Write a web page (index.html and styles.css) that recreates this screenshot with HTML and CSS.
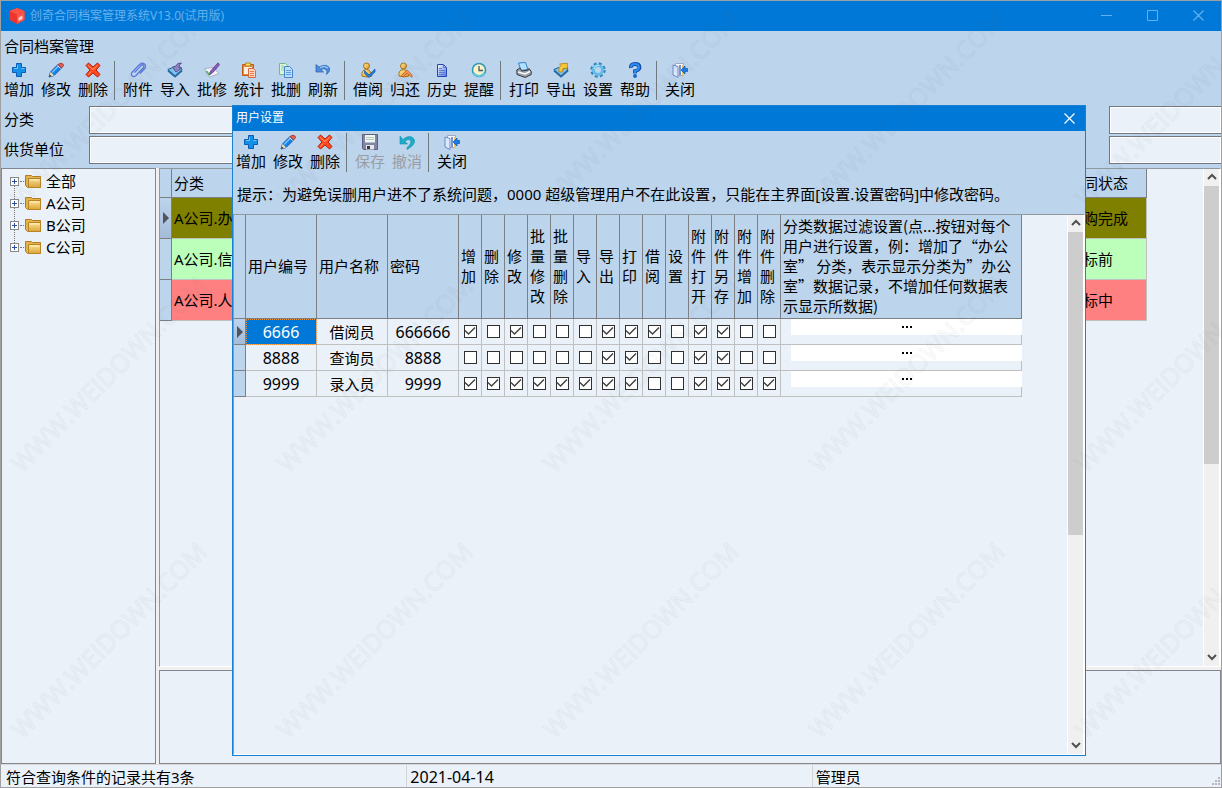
FILE: index.html
```html
<!DOCTYPE html>
<html lang="zh-CN">
<head>
<meta charset="utf-8">
<title>创奇合同档案管理系统</title>
<link rel="stylesheet" href="styles.css">
</head>
<body>
<svg class="defs" aria-hidden="true">
  <defs>
    <linearGradient id="gb" x1="0" y1="0" x2="1" y2="1"><stop offset="0" stop-color="#5cc8ff"/><stop offset="1" stop-color="#0668c8"/></linearGradient>
    <linearGradient id="gy" x1="0" y1="0" x2="1" y2="1"><stop offset="0" stop-color="#fff0a0"/><stop offset="1" stop-color="#dc941c"/></linearGradient>
    <linearGradient id="gf" x1="0" y1="0" x2="0" y2="1"><stop offset="0" stop-color="#fbe49a"/><stop offset="1" stop-color="#dca437"/></linearGradient>
    <linearGradient id="gd" x1="0" y1="0" x2="1" y2="1"><stop offset="0" stop-color="#f4f8ff"/><stop offset="1" stop-color="#5878dc"/></linearGradient>
  </defs>
  <symbol id="add" viewBox="0 0 16 16"><path d="M5.500 1.500h5v4h4v5h-4v4h-5v-4h-4v-5h4z" fill="#1490e8" stroke="#0a5cb4"/><path d="M6.500 3v3.500H3M10.500 6.500h3" fill="none" stroke="#6cc8ff"/></symbol>
  <symbol id="edit" viewBox="0 0 16 16"><path d="M1 15l1.500-5L10 2.500l3.500 3.500L6 13.500z" fill="#1684e8" stroke="#1258b0"/><path d="M4 10.500l6.500-6.500" stroke="#7cc8ff" stroke-width="1.200"/><path d="M10 2.500Q13 .2 15 2q1.400 2-1.500 4z" fill="#e86050" stroke="#a84038"/><path d="M9.500 3.500l3 3" stroke="#e8e8f0"/><path d="M1 15l1.500-5L6 13.500z" fill="#f4dcb0"/><path d="M1 15l.8-2.500 1.700 1.700z" fill="#223"/></symbol>
  <symbol id="del" viewBox="0 0 16 16"><path d="M1 3.500L3.500 1 8 5l4.500-4L15 3.500 11 8l4 4.500-2.500 2.500L8 11l-4.500 4L1 12.500 5 8z" fill="#ff4a20" stroke="#b81c08"/><path d="M3 3.500l5 4 4.500-4M3.500 12.500L6 9.500" fill="none" stroke="#ff9a74"/></symbol>
  <symbol id="clip" viewBox="0 0 16 16"><path d="M4.500 10.500l6.500-7q1.500-1.300 2.500-.3t-.2 2.500l-7.500 8q-2 1.700-3.600.3T2 10.500L9 3q3-3 5.500-1t.2 4.500L10 11.500" fill="none" stroke="#5a78dc" stroke-width="1.300"/><path d="M3 11l7-7.500" stroke="#b4c8ff" stroke-width=".6"/></symbol>
  <symbol id="import" viewBox="0 0 16 16"><path d="M.8 7.500l5-2 3 2 5-2.500L15 8l-7 6.500z" fill="#7cc4ec" stroke="#225c90"/><path d="M1 8.500l7 6 7-6" fill="none" stroke="#2468a4" stroke-width="1.800"/><path d="M14.500 1Q10 .5 9 4L5.500 5 9 10l5-3.500-2-1Q12 2.500 14.500 1z" fill="#9084c4" stroke="#5c5090"/></symbol>
  <symbol id="batch" viewBox="0 0 16 16"><path d="M.8 6.500l9-1 5 6-9 3.500q-3-1-5-8.500z" fill="#f4f6fb" stroke="#a4acc4"/><path d="M2.500 9l2.500 3.500L7 9" fill="none" stroke="#5cb05c" stroke-width="1.500"/><path d="M5.500 13L7 8.500 14 .8l1.500 2L9.500 10z" fill="#8c58bc" stroke="#5c3888" stroke-width=".7"/></symbol>
  <symbol id="stat" viewBox="0 0 16 16"><path d="M1.500 2.500h11v11h-11z" fill="#e88c3c" stroke="#b85c1c"/><path d="M4.500 1h5v3h-5z" fill="#ffe060" stroke="#b48420"/><path d="M3 5h8v7H3z" fill="#fff0dc"/><path d="M7.500 6.500h5l2 2v7h-7z" fill="#ffd8c4" stroke="#d86840"/><path d="M9 9.500h4M9 11.500h4M9 13.500h4" stroke="#e87850"/></symbol>
  <symbol id="copy" viewBox="0 0 16 16"><path d="M1.500 1.500h6l2 2v9h-8z" fill="#dcf6dc" stroke="#78b888"/><path d="M3 4h3M3 6h3M3 8h3" stroke="#90ccaa"/><path d="M6.500 4.500h5l3 3v8h-8z" fill="#c0dcff" stroke="#4284cc"/><path d="M8 8.500h5M8 10.500h5M8 12.500h5" stroke="#5c9ce4"/></symbol>
  <symbol id="refresh" viewBox="0 0 16 16"><path d="M1 2.500v7.500h7.500L5.800 7.500q3.400-1.700 5.200 0 1.700 1.700.5 5 4-3 3-6.500-3-5-10.500-1z" fill="#4c8cdc" stroke="#3468b4" stroke-width=".8"/><path d="M5 5.500q5-2.500 8 .5" fill="none" stroke="#b4dcff"/></symbol>
  <symbol id="lend" viewBox="0 0 16 16"><circle cx="6.500" cy="4" r="3" fill="url(#gy)" stroke="#a87018"/><path d="M2 14q-1-6 4.500-6.500Q11 8 12 14q-5 2-10 0z" fill="url(#gy)" stroke="#a87018"/><path d="M4.500 8.500L9 13l6-6v3l-6 5.500-4.500-4z" fill="#2080e0" stroke="#1458a8" stroke-width=".7"/></symbol>
  <symbol id="return" viewBox="0 0 16 16"><circle cx="6.500" cy="4" r="3" fill="url(#gy)" stroke="#a87018"/><path d="M2 14q-1-6 4.500-6.500Q11 8 12 14q-5 2-10 0z" fill="url(#gy)" stroke="#a87018"/><path d="M4.500 13.500L10 8l5 5v2.500L10 11l-4 4z" fill="#ff9450" stroke="#b85820" stroke-width=".7"/></symbol>
  <symbol id="history" viewBox="0 0 16 16"><path d="M3.500 2.500h6l3 3v9h-9z" fill="url(#gd)" stroke="#2446b4"/><path d="M9.500 2.500v3h3M5 6.500h3M5 8.500h6M5 10.500h6M5 12.500h6" fill="none" stroke="#5c7cdc"/></symbol>
  <symbol id="clock" viewBox="0 0 16 16"><circle cx="8" cy="8" r="6.500" fill="#fff2c4" stroke="#2d9cba" stroke-width="1.600"/><path d="M2.500 11q5.500 6 11 0" fill="none" stroke="#66ccdc" stroke-width="2"/><path d="M8 4v4.500h4" fill="none" stroke="#465868" stroke-width="1.300"/></symbol>
  <symbol id="print" viewBox="0 0 16 16"><path d="M2.500 1l7-.5 2.500 7-7 1z" fill="#b4e0ff" stroke="#3480c8"/><path d="M.8 8l3-2L6 9l6-1 1-1.500 2.200 3v3l-6 3-8.200-3z" fill="#9ca0a8" stroke="#34383f"/><path d="M2 10l7 2 5-2.500" fill="none" stroke="#f8f8f8" stroke-width="1.500"/></symbol>
  <symbol id="export" viewBox="0 0 16 16"><path d="M.8 7.500l5-2 3 2 5-2.500L15 8l-7 6.500z" fill="#7cc4ec" stroke="#225c90"/><path d="M1 8.500l7 6 7-6" fill="none" stroke="#2468a4" stroke-width="1.800"/><path d="M6 10q-1-5 2-6.500L6.500 2l8-.8L14 7.500l-2-1.500Q9 6 9.500 10z" fill="#f8c838" stroke="#b47c10" stroke-width=".8"/></symbol>
  <symbol id="gear" viewBox="0 0 16 16"><circle cx="8" cy="8" r="6" fill="none" stroke="#3484bc" stroke-width="3.400" stroke-dasharray="2.700 2.012"/><circle cx="8" cy="8" r="4.500" fill="none" stroke="#64bce8" stroke-width="3"/><path d="M4 7q1-4 5-3.500" fill="none" stroke="#c8f0ff"/></symbol>
  <symbol id="help" viewBox="0 0 16 16"><path d="M3.800 6Q3.500 2 8 2t4.500 3.500Q12.500 8 8 9v2.500" fill="none" stroke="#124ca8" stroke-width="3.800"/><path d="M3.800 5.500Q4 2 8 2t4 3.500Q12 8 8 9v2" fill="none" stroke="#2c8cf0" stroke-width="2"/><circle cx="8" cy="14" r="2" fill="#1868d0"/></symbol>
  <symbol id="exit" viewBox="0 0 16 16"><path d="M3.500 1.500h8v12h-8z" fill="#f6f8ff" stroke="#a0a8c0"/><path d="M1 3l5 1.500v11L1 13z" fill="#dce8fc" stroke="#6c88c8"/><path d="M7 3h2v10H7z" fill="#7894d8"/><path d="M10 3h2v11h-2z" fill="#e4c460"/><path d="M15.500 6.500H13V4L9 8l4 4V9.500h2.500z" fill="#1c7ce8" stroke="#0c50a8" stroke-width=".7"/></symbol>
  <symbol id="save" viewBox="0 0 16 16"><path d="M.5.5h15v15h-14l-1-1z" fill="#8484a4" stroke="#60607c"/><path d="M3 1h10v7.500H3z" fill="#eef6f0"/><path d="M4 3.500h8M4 5.500h8" stroke="#b4c8bc"/><path d="M4 11h8v4.500H4z" fill="#e8e8ec"/><path d="M5 12h3v3H5z" fill="#303844"/></symbol>
  <symbol id="undo" viewBox="0 0 16 16"><path d="M1 2v8h7.500L6 7.500Q9 4.300 11.300 6q2 3-3.300 7.500v2q8.500-4.500 7.500-9.500Q13 .8 6.500 3.500L4.200 5.500z" fill="#1cacc8" stroke="#1490b0" stroke-width=".6"/></symbol>
  <symbol id="folder" viewBox="0 0 16 14"><path d="M.5 1.500h6l1 1h8v11h-13l-2-2z" fill="#e4b44c" stroke="#b47c20"/><path d="M3.500 4.500h12v9h-12z" fill="url(#gf)" stroke="#b88424"/><path d="M5 6h9" stroke="#fff2b8"/></symbol>
  <symbol id="close" viewBox="0 0 11 11"><path d="M.5.5l10 10M10.500.5l-10 10" fill="none" stroke="currentColor" stroke-width="1.200"/></symbol>
  <symbol id="up" viewBox="0 0 10 10"><path d="M1 7l4-4 4 4" fill="none" stroke="#505050" stroke-width="2"/></symbol>
  <symbol id="down" viewBox="0 0 10 10"><path d="M1 3l4 4 4-4" fill="none" stroke="#505050" stroke-width="2"/></symbol>
</svg>

<div class="window">
  <header class="titlebar">
    <svg class="logo" viewBox="0 0 16 16"><path d="M8 0l7.500 3v9L8 16 .5 12V3z" fill="#ee352e"/><path d="M8 0l7.500 3L8 6.500.5 3z" fill="#ff5348"/><path d="M8 6.500V16l7.500-4V3.500z" fill="#ff5348"/><path d="M9.500 9.500l4-2v3.500l-4 2z" fill="#ffd0c8"/></svg>
    <span class="app-name">创奇合同档案管理系统V13.0(试用版)</span>
    <button class="caption" aria-label="最小化"><svg width="11" height="11"><path d="M0 5.500h11" stroke="currentColor"/></svg></button>
    <button class="caption" aria-label="最大化"><svg width="11" height="11"><path d="M.5.5h10v10H.5z" fill="none" stroke="currentColor"/></svg></button>
    <button class="caption" aria-label="关闭窗口"><svg width="11" height="11"><use href="#close"/></svg></button>
  </header>
  <div class="menu">合同档案管理</div>
  <nav class="toolbar">
    <button><svg><use href="#add"/></svg>增加</button>
    <button><svg><use href="#edit"/></svg>修改</button>
    <button><svg><use href="#del"/></svg>删除</button>
    <i></i>
    <button><svg><use href="#clip"/></svg>附件</button>
    <button><svg><use href="#import"/></svg>导入</button>
    <button><svg><use href="#batch"/></svg>批修</button>
    <button><svg><use href="#stat"/></svg>统计</button>
    <button><svg><use href="#copy"/></svg>批删</button>
    <button><svg><use href="#refresh"/></svg>刷新</button>
    <i></i>
    <button><svg><use href="#lend"/></svg>借阅</button>
    <button><svg><use href="#return"/></svg>归还</button>
    <button><svg><use href="#history"/></svg>历史</button>
    <button><svg><use href="#clock"/></svg>提醒</button>
    <i></i>
    <button><svg><use href="#print"/></svg>打印</button>
    <button><svg><use href="#export"/></svg>导出</button>
    <button><svg><use href="#gear"/></svg>设置</button>
    <button><svg><use href="#help"/></svg>帮助</button>
    <i></i>
    <button><svg><use href="#exit"/></svg>关闭</button>
  </nav>
  <form class="filters">
    <label for="kind">分类</label><input id="kind" type="text"><input class="last" type="text" aria-label="条件一">
    <label for="vendor">供货单位</label><input id="vendor" type="text"><input class="last" type="text" aria-label="条件二">
  </form>
  <main class="panes">
    <ul class="tree">
      <li><span class="plus"></span><svg><use href="#folder"/></svg>全部</li>
      <li><span class="plus"></span><svg><use href="#folder"/></svg>A公司</li>
      <li><span class="plus"></span><svg><use href="#folder"/></svg>B公司</li>
      <li><span class="plus"></span><svg><use href="#folder"/></svg>C公司</li>
    </ul>
    <div class="right">
      <section class="grid">
        <div class="sheet">
          <table class="records">
            <colgroup><col class="c-mark"><col><col class="c-state"></colgroup>
            <tr><th class="mark"></th><th>分类</th><th>同状态</th></tr>
            <tr class="olive"><td class="mark current"></td><td>A公司.办</td><td>购完成</td></tr>
            <tr class="green"><td class="mark"></td><td>A公司.信</td><td>标前</td></tr>
            <tr class="red"><td class="mark"></td><td>A公司.人</td><td>标中</td></tr>
          </table>
        </div>
        <div class="scroll"><svg><use href="#up"/></svg><div class="track"><div class="thumb"></div></div><svg><use href="#down"/></svg></div>
      </section>
      <section class="detail"></section>
    </div>
  </main>
  <footer class="status">
    <span>符合查询条件的记录共有3条</span><span class="num">2021-04-14</span><span>管理员</span>
    <svg class="grip" viewBox="0 0 8 8"><path d="M6 0h2v2H6zM6 3h2v2H6zM3 3h2v2H3zM6 6h2v2H6zM3 6h2v2H3zM0 6h2v2H0z" fill="#b4b8bc"/></svg>
  </footer>
</div>

<div class="dialog" role="dialog" aria-labelledby="dlg">
  <header class="dialog-title"><span id="dlg">用户设置</span><button class="caption" aria-label="关闭对话框"><svg width="11" height="11"><use href="#close"/></svg></button></header>
  <nav class="toolbar">
    <button><svg><use href="#add"/></svg>增加</button>
    <button><svg><use href="#edit"/></svg>修改</button>
    <button><svg><use href="#del"/></svg>删除</button>
    <i></i>
    <button disabled><svg><use href="#save"/></svg>保存</button>
    <button disabled><svg><use href="#undo"/></svg>撤消</button>
    <i></i>
    <button><svg><use href="#exit"/></svg>关闭</button>
  </nav>
  <p class="hint">提示：为避免误删用户进不了系统问题，0000 超级管理用户不在此设置，只能在主界面[设置.设置密码]中修改密码。</p>
  <section class="grid">
    <div class="sheet">
      <table class="users">
        <colgroup><col class="c-mark"><col class="c-name" span="3"><col class="c-flag" span="14"><col class="c-filter"></colgroup>
        <thead>
          <tr><th class="mark"></th><th>用户编号</th><th>用户名称</th><th>密码</th><th class="v">增加</th><th class="v">删除</th><th class="v">修改</th><th class="v">批量修改</th><th class="v">批量删除</th><th class="v">导入</th><th class="v">导出</th><th class="v">打印</th><th class="v">借阅</th><th class="v">设置</th><th class="v">附件打开</th><th class="v">附件另存</th><th class="v">附件增加</th><th class="v">附件删除</th>
          <th class="long">分类数据过滤设置(点...按钮对每个<br>用户进行设置，例：增加了“办公<br>室” 分类，表示显示分类为”办公<br>室”数据记录，不增加任何数据表<br>示显示所数据)</th></tr>
        </thead>
        <tbody>
          <tr><td class="mark current"></td><td class="num selected">6666</td><td>借阅员</td><td class="num">666666</td>
            <td><input type="checkbox" aria-label="增加" checked></td><td><input type="checkbox" aria-label="删除"></td><td><input type="checkbox" aria-label="修改" checked></td><td><input type="checkbox" aria-label="批量修改"></td><td><input type="checkbox" aria-label="批量删除"></td><td><input type="checkbox" aria-label="导入"></td><td><input type="checkbox" aria-label="导出" checked></td><td><input type="checkbox" aria-label="打印" checked></td><td><input type="checkbox" aria-label="借阅" checked></td><td><input type="checkbox" aria-label="设置"></td><td><input type="checkbox" aria-label="附件打开" checked></td><td><input type="checkbox" aria-label="附件另存" checked></td><td><input type="checkbox" aria-label="附件增加"></td><td><input type="checkbox" aria-label="附件删除"></td>
            <td class="more"><button aria-label="过滤设置"><svg><path d="M0 0h2v2H0zM4 0h2v2H4zM8 0h2v2H8z"/></svg></button></td></tr>
          <tr><td class="mark"></td><td class="num">8888</td><td>查询员</td><td class="num">8888</td>
            <td><input type="checkbox" aria-label="增加"></td><td><input type="checkbox" aria-label="删除"></td><td><input type="checkbox" aria-label="修改"></td><td><input type="checkbox" aria-label="批量修改"></td><td><input type="checkbox" aria-label="批量删除"></td><td><input type="checkbox" aria-label="导入"></td><td><input type="checkbox" aria-label="导出" checked></td><td><input type="checkbox" aria-label="打印" checked></td><td><input type="checkbox" aria-label="借阅"></td><td><input type="checkbox" aria-label="设置"></td><td><input type="checkbox" aria-label="附件打开" checked></td><td><input type="checkbox" aria-label="附件另存" checked></td><td><input type="checkbox" aria-label="附件增加"></td><td><input type="checkbox" aria-label="附件删除"></td>
            <td class="more"><button aria-label="过滤设置"><svg><path d="M0 0h2v2H0zM4 0h2v2H4zM8 0h2v2H8z"/></svg></button></td></tr>
          <tr><td class="mark"></td><td class="num">9999</td><td>录入员</td><td class="num">9999</td>
            <td><input type="checkbox" aria-label="增加" checked></td><td><input type="checkbox" aria-label="删除" checked></td><td><input type="checkbox" aria-label="修改" checked></td><td><input type="checkbox" aria-label="批量修改" checked></td><td><input type="checkbox" aria-label="批量删除" checked></td><td><input type="checkbox" aria-label="导入" checked></td><td><input type="checkbox" aria-label="导出" checked></td><td><input type="checkbox" aria-label="打印" checked></td><td><input type="checkbox" aria-label="借阅"></td><td><input type="checkbox" aria-label="设置"></td><td><input type="checkbox" aria-label="附件打开" checked></td><td><input type="checkbox" aria-label="附件另存" checked></td><td><input type="checkbox" aria-label="附件增加" checked></td><td><input type="checkbox" aria-label="附件删除" checked></td>
            <td class="more"><button aria-label="过滤设置"><svg><path d="M0 0h2v2H0zM4 0h2v2H4zM8 0h2v2H8z"/></svg></button></td></tr>
        </tbody>
      </table>
    </div>
    <div class="scroll"><svg><use href="#up"/></svg><div class="track"><div class="thumb"></div></div><svg><use href="#down"/></svg></div>
  </section>
</div>

<svg class="watermark" aria-hidden="true">
  <defs><pattern id="wm" width="266" height="266" patternUnits="userSpaceOnUse"><text transform="translate(22 208) rotate(-45)">WWW.WEIDOWN.COM</text></pattern></defs>
  <rect width="100%" height="100%" fill="url(#wm)"/>
</svg>
</body>
</html>
```

FILE: styles.css
```css
* { box-sizing: border-box; }
body {
  margin: 0;
  font: 15px/20px "Noto Sans", "Noto Sans CJK SC", sans-serif;
  color: #000;
  overflow: hidden;
}
button, input { font: inherit; color: inherit; margin: 0; padding: 0; border: 0; background: none; }
.defs { position: absolute; width: 0; height: 0; }

.window {
  display: flex;
  flex-direction: column;
  height: 100vh;
  border: 1px solid #a0a0a0;
  background: #bcd4ec;
}
.titlebar {
  display: flex;
  align-items: center;
  height: 30px;
  padding-left: 8px;
  padding-bottom: 1px;
  background: #0078d7;
  color: #66b0ec;
  font-size: 12px;
}
.logo { width: 16px; height: 16px; margin-right: 5px; }
.app-name { flex: 1; white-space: nowrap; }
.caption { display: flex; align-items: center; justify-content: center; width: 46px; height: 24px; }
.menu { height: 30px; padding: 5px 3px; }

.toolbar { display: flex; height: 40px; }
.toolbar button {
  display: flex;
  flex-direction: column;
  align-items: center;
  width: 37px;
  padding-top: 1px;
  padding-right: 1px;
  white-space: nowrap;
}
.toolbar svg { width: 16px; height: 16px; margin-bottom: 1px; }
.toolbar i { width: 8px; height: 39px; background: linear-gradient(#707880, #707880) 2px 0 / 1px 100% no-repeat; }
.toolbar button:disabled { color: #9a9ea4; }

.filters {
  display: grid;
  grid-template-columns: 85px 1fr 112px;
  grid-auto-rows: 28px;
  row-gap: 2px;
  padding: 5px 0 4px 3px;
}
.filters label { line-height: 26px; }
.filters input { min-width: 0; border: 1px solid #74787e; background: #eaf1f9; box-shadow: inset 0 0 0 1px #fff; }
.filters #kind, .filters #vendor { margin-right: 200px; }
.filters .last { border-right: 0; }

.panes { display: flex; flex: 1; min-height: 0; gap: 3px; background: #f0f0f0; }
.tree {
  width: 155px;
  margin: 0;
  padding: 1px 0 0 8px;
  list-style: none;
  border: 1px solid #828790;
  background: #eaf1f9;
}
.tree li { display: flex; align-items: center; height: 22px; position: relative; }
.tree svg { width: 16px; height: 14px; margin: 0 5px 0 6px; }
.tree .plus {
  width: 9px;
  height: 9px;
  border: 1px solid #888;
  background: linear-gradient(#2c4c9c, #2c4c9c) center / 5px 1px no-repeat, linear-gradient(#2c4c9c, #2c4c9c) center / 1px 5px no-repeat, #fff;
}
.tree .plus::after { content: ""; position: absolute; left: 10px; top: 11px; width: 6px; border-top: 1px dotted #777; }
.tree li + li::before { content: ""; position: absolute; left: 4px; top: -6px; height: 13px; border-left: 1px dotted #777; }

.right { display: flex; flex-direction: column; flex: 1; gap: 3px; min-width: 0; }
.grid {
  display: flex;
  flex: 1;
  min-height: 0;
  border: 1px solid;
  border-color: #9098a0 #fff #fff #9098a0;
  background: #eaf1f9;
}
.detail { flex: 0 0 94px; border: 1px solid #828790; background: #eaf1f9; }
.sheet { flex: 1; min-width: 0; overflow: hidden; }
.scroll { display: flex; flex-direction: column; align-items: center; width: 17px; border: solid #fff; border-width: 0 1px; background: #f0f0f0; }
.scroll svg { width: 10px; height: 10px; margin: 3px 0 4px; }
.track { flex: 1; width: 100%; }
.thumb { height: 60%; background: #cdcdcd; }

table { border-collapse: separate; border-spacing: 0; table-layout: fixed; }
th, td { padding: 0 2px; border: solid #c0c0c0; border-width: 0 1px 1px 0; font-weight: 400; text-align: left; white-space: nowrap; overflow: hidden; }
th, .mark { background: #bcd4ec; border-color: #7c8084; }
.mark { padding: 0; }
.c-mark { width: 12px; }
.current { background: linear-gradient(#bcd4ec, #a4bcd8); }
.current::before { content: ""; display: block; margin-left: 3px; width: 0; border: solid transparent; border-width: 6px 0 6px 6px; border-left-color: #50545c; }

.records { width: calc(100% - 56px); }
.c-state { width: 66px; }
.records tr { height: 41px; }
.records tr:first-child { height: 29px; }
.olive { background: #808000; }
.green { background: #bbffbb; }
.red { background: #ff8080; }

.status { position: relative; display: grid; grid-template-columns: repeat(3, 1fr); height: 23px; padding-right: 4px; border-top: 1px solid #d8d8d8; background: #eaf1f9; }
.status span { padding: 2px 3px 0; border-left: 1px solid #d4d4d4; }
.status span:first-child { padding-left: 5px; border-left: 0; }
.grip { position: absolute; right: 1px; bottom: 2px; width: 8px; height: 8px; }
.num { font-size: 16px; }

.dialog {
  position: absolute;
  left: 232px;
  right: 136px;
  top: 105px;
  bottom: 32px;
  display: flex;
  flex-direction: column;
  border: 1px solid #1a80d2;
  background: #bcd4ec;
}
.dialog-title { display: flex; align-items: center; justify-content: space-between; height: 25px; margin-bottom: 2px; padding: 0 1px 1px 3px; background: #0078d7; color: #fff; font-size: 12px; }
.dialog-title .caption { width: 30px; }
.dialog .toolbar { flex: none; }
.hint { margin: 0; padding: 11px 4px 10px; white-space: nowrap; }

.c-name { width: 71px; }
.c-flag { width: 23px; }
.c-filter { width: 241px; }
.users { width: 788px; }
.users th { padding-bottom: 2px; }
.users thead tr { height: 104px; }
.users tbody tr { height: 26px; }
.users .v { white-space: normal; word-break: break-all; }
.users .long { font-family: "Noto Sans CJK SC", sans-serif; }
.users td { text-align: center; }
.users .selected { background: #0078d7; color: #fff; outline: 1px dotted #f09030; outline-offset: -1px; }
.users input {
  appearance: none;
  display: block;
  width: 13px;
  height: 13px;
  margin: 0 auto;
  border: 1px solid #303030;
  background: #fff;
}
.users input:checked::before {
  content: "";
  display: block;
  width: 11px;
  height: 11px;
  background: #404040;
  clip-path: polygon(0 5px, 1px 4px, 4px 7px, 10px 1px, 11px 2px, 4px 9px);
}
.users .more { padding: 0 0 0 10px; vertical-align: top; overflow: visible; }
.more button { display: flex; justify-content: center; width: 231px; height: 16px; padding-top: 7px; background: #fff; }
.more svg { width: 10px; height: 2px; }

.watermark { position: absolute; left: 0; top: 0; width: 100%; height: 100%; pointer-events: none; }
.watermark text { font: 25px "Open Sans", sans-serif; fill: none; stroke: #506070; stroke-opacity: .07; stroke-width: 1px; }
```
